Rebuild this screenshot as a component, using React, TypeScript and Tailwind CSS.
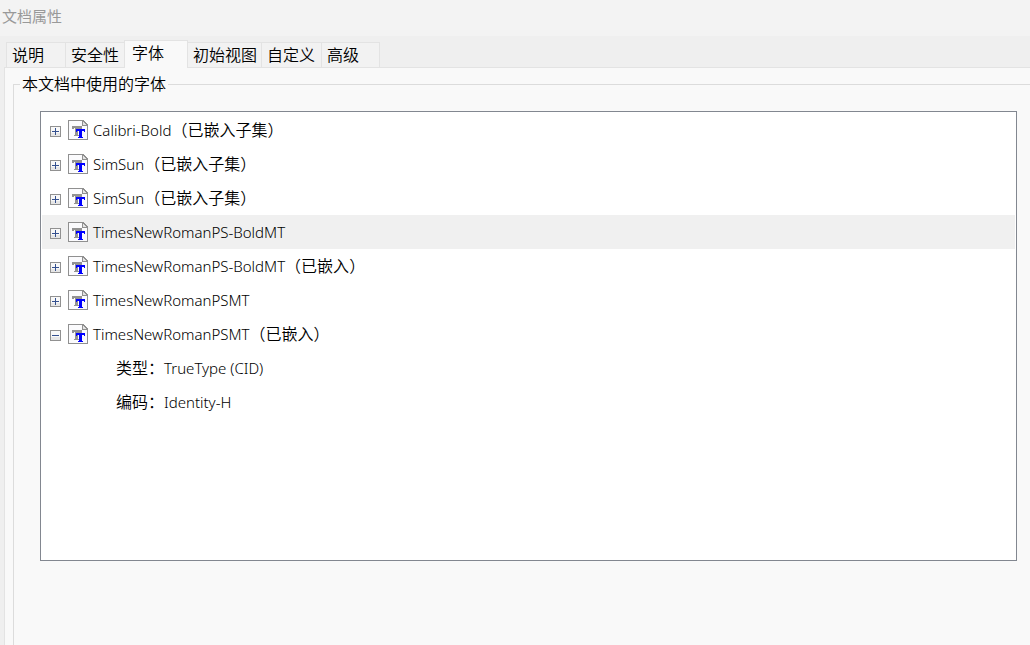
import { useState } from "react";

interface FontEntry {
  name: string;
  note?: string;
  details: { label: string; value: string }[];
}

const tabs = [
  { id: "description", label: "说明", width: "w-15" },
  { id: "security", label: "安全性", width: "w-[59px]" },
  { id: "fonts", label: "字体", width: "w-16" },
  { id: "view", label: "初始视图", width: "w-[74px]" },
  { id: "custom", label: "自定义", width: "w-15" },
  { id: "advanced", label: "高级", width: "w-[58px]" },
];

const trueType = [
  { label: "类型", value: "TrueType (CID)" },
  { label: "编码", value: "Identity-H" },
];

const fonts: FontEntry[] = [
  { name: "Calibri-Bold", note: "已嵌入子集", details: trueType },
  { name: "SimSun", note: "已嵌入子集", details: trueType },
  { name: "SimSun", note: "已嵌入子集", details: trueType },
  { name: "TimesNewRomanPS-BoldMT", details: trueType },
  { name: "TimesNewRomanPS-BoldMT", note: "已嵌入", details: trueType },
  { name: "TimesNewRomanPSMT", details: trueType },
  { name: "TimesNewRomanPSMT", note: "已嵌入", details: trueType },
];

const FontIcon = () => (
  <svg
    className="h-5 w-5 shrink-0"
    viewBox="0 0 20 20"
    shapeRendering="crispEdges"
    aria-hidden="true"
  >
    <path d="M0 0h15l5 5v15H0z" fill="#909090" />
    <path d="M1 1h13v5h5v13H1z" fill="#fbfbfd" />
    <path d="M15 2l3 3h-3z" fill="#e4e4e4" />
    <path d="M4 6h10v3h-4v6h1v1H6v-1h1V8H6v1H4z" fill="#929292" />
    <path d="M8 9h9v3h-1v-1h-2v6h1v1h-5v-1h1v-6H9v1H8z" fill="#0000ff" />
  </svg>
);

const ExpandIcon = ({ open }: { open: boolean }) => (
  <svg
    className="block h-[11px] w-[11px]"
    viewBox="0 0 11 11"
    shapeRendering="crispEdges"
    aria-hidden="true"
  >
    <rect width="11" height="11" fill="#919191" />
    <rect x="1" y="1" width="9" height="9" fill="#f8f8f8" />
    <rect x="1" y="7" width="9" height="3" fill="#e6e6e6" />
    <path d="M2 5h7v1H2z" fill="#34508f" />
    {!open && <path d="M5 2h1v7H5z" fill="#34508f" />}
  </svg>
);

const App = () => {
  const [activeTab, setActiveTab] = useState("fonts");
  const [selected, setSelected] = useState(3);
  const [expanded, setExpanded] = useState<number[]>([6]);

  const toggle = (index: number) => {
    setExpanded((prev) =>
      prev.includes(index) ? prev.filter((i) => i !== index) : [...prev, index]
    );
  };

  return (
    <div className="flex min-h-screen flex-col bg-[#efefef] font-['Noto_Sans','Noto_Sans_CJK_SC',sans-serif] text-base font-[350] leading-6 text-black">
      <header className="h-9 bg-[#f3f3f3] px-0.5 py-1">
        <h1 className="text-[15px] font-normal text-[#999999]">文档属性</h1>
      </header>

      <div role="tablist" className="relative z-10 flex items-end pl-1.5 pt-1">
        {tabs.map((tab) => {
          const active = tab.id === activeTab;
          return (
            <button
              key={tab.id}
              type="button"
              role="tab"
              aria-selected={active}
              onClick={() => setActiveTab(tab.id)}
              className={`${tab.width} shrink-0 whitespace-nowrap border-t border-[#e3e3e3] text-left ${
                active
                  ? "-mb-px -ml-px h-7 border-x bg-[#f9f9f9] pb-1 pl-[7px]"
                  : "h-[25px] border-r bg-[#f2f2f2] pl-[5px] first:border-l"
              }`}
            >
              {tab.label}
            </button>
          );
        })}
      </div>

      <main className="ml-1 flex grow flex-col border-l border-t border-[#e3e3e3] bg-[#f9f9f9] pl-2 pt-1">
        <fieldset className="grow border-l border-t border-[#dcdcdc] pb-6 pl-[26px] pr-[13px]">
          <legend className="-ml-5 px-0.5">本文档中使用的字体</legend>
          <ul
            role="tree"
            aria-label="本文档中使用的字体"
            className="mt-[15px] h-[450px] overflow-auto border border-[#828790] bg-white p-px"
          >
            {fonts.map((font, index) => {
              const open = expanded.includes(index);
              return (
                <li key={index} role="treeitem" aria-expanded={open}>
                  <div
                    onClick={() => setSelected(index)}
                    className={`flex h-[34px] items-center pl-2 ${
                      selected === index ? "bg-[#f0f0f0]" : ""
                    }`}
                  >
                    <button
                      type="button"
                      aria-label={font.name}
                      onClick={() => toggle(index)}
                      className="mr-[7px] pt-0.5"
                    >
                      <ExpandIcon open={open} />
                    </button>
                    <FontIcon />
                    <span className="ml-[5px] text-[15px]">{font.name}</span>
                    {font.note && <span>（{font.note}）</span>}
                  </div>
                  {open && (
                    <dl>
                      {font.details.map((item) => (
                        <div
                          key={item.label}
                          className="flex h-[34px] items-center pl-[74px]"
                        >
                          <dt>{item.label}：</dt>
                          <dd className="text-[15px]">{item.value}</dd>
                        </div>
                      ))}
                    </dl>
                  )}
                </li>
              );
            })}
          </ul>
        </fieldset>
      </main>
    </div>
  );
};

export default App;
